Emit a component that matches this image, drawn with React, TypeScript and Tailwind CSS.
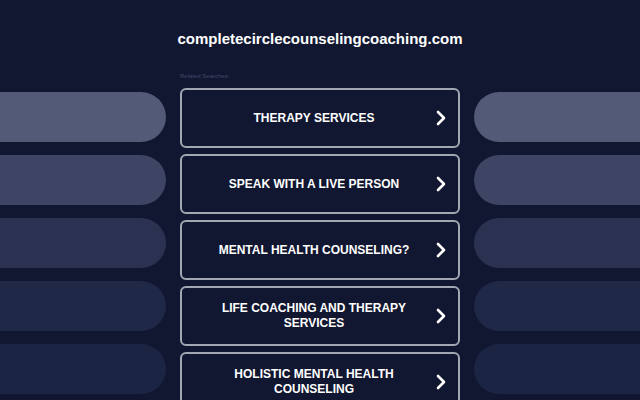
const searches = [
  "THERAPY SERVICES",
  "SPEAK WITH A LIVE PERSON",
  "MENTAL HEALTH COUNSELING?",
  "LIFE COACHING AND THERAPY SERVICES",
  "HOLISTIC MENTAL HEALTH COUNSELING",
];

const pillColors = [
  "bg-[#525a78]",
  "bg-[#3e4564]",
  "bg-[#2b3251]",
  "bg-[#202847]",
  "bg-[#1c2444]",
];

function Chevron() {
  return (
    <svg width="10" height="16" viewBox="0 0 10 16" fill="none" className="shrink-0">
      <path d="M2 2l6 6-6 6" stroke="white" strokeWidth="2.6" strokeLinecap="round" strokeLinejoin="round" />
    </svg>
  );
}

export default function App() {
  return (
    <main
      className="h-[400px] w-[640px] overflow-hidden bg-[#111730] text-white"
      style={{ fontFamily: '"Liberation Sans", Arial, sans-serif' }}
    >
      <h1 className="pt-[29px] text-center text-[15px] font-bold leading-[20px]">
        completecirclecounselingcoaching.com
      </h1>

      <div className="mt-[19px] flex gap-[14px]">
        <div className="flex w-[166px] shrink-0 flex-col gap-[13px] pt-[24px]">
          {pillColors.map((c) => (
            <div key={c} className={`h-[50px] w-full rounded-r-full ${c}`} />
          ))}
        </div>

        <div className="w-[280px] shrink-0">
          <p className="h-[20px] pt-[1px] text-[6px] leading-[14px] text-[#414868]">Related Searches:</p>
          <div className="flex flex-col gap-[6px]">
            {searches.map((s) => (
              <div
                key={s}
                className="flex h-[60px] items-center rounded-[6px] border-2 border-[#a3a7b3] bg-[#111730] pl-[10px] pr-[12px]"
              >
                <span className="flex-1 px-[18px] text-center text-[12px] font-bold leading-[15px]">{s}</span>
                <Chevron />
              </div>
            ))}
          </div>
        </div>

        <div className="flex w-[166px] shrink-0 flex-col gap-[13px] pt-[24px]">
          {pillColors.map((c) => (
            <div key={c} className={`h-[50px] w-full rounded-l-full ${c}`} />
          ))}
        </div>
      </div>
    </main>
  );
}
